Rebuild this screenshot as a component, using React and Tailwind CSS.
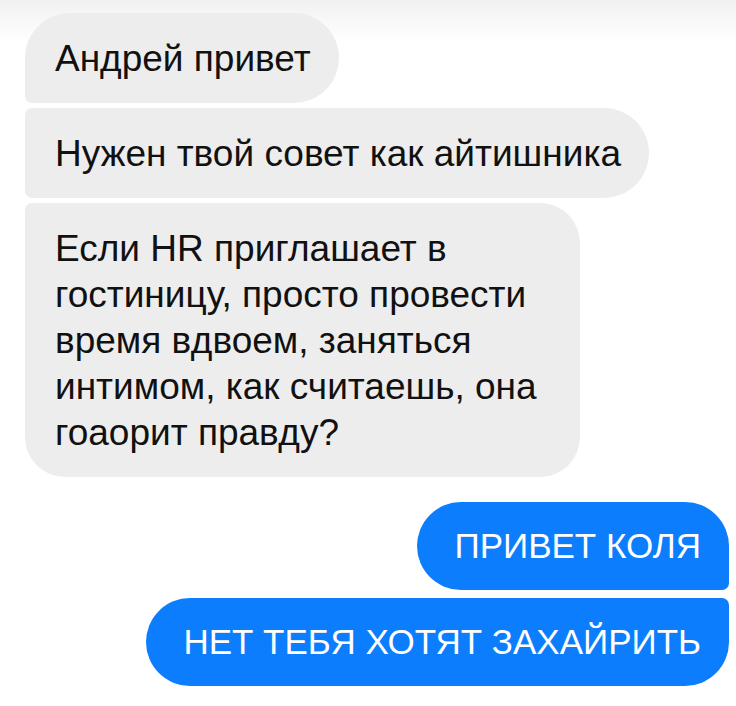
import React from "react";

const incoming = [
  { id: 1, lines: ["Андрей привет"], shape: "rounded-[45px] rounded-bl-[7px]" },
  { id: 2, lines: ["Нужен твой совет как айтишника"], shape: "rounded-r-[45px] rounded-l-[7px]" },
  {
    id: 3,
    lines: [
      "Если HR приглашает в",
      "гостиницу, просто провести",
      "время вдвоем, заняться",
      "интимом, как считаешь, она",
      "гоаорит правду?",
    ],
    shape: "w-[555px] rounded-[40px] rounded-tl-[7px]",
  },
];

const outgoing = [
  { id: 4, text: "ПРИВЕТ КОЛЯ", shape: "rounded-[44px] rounded-br-[7px]" },
  { id: 5, text: "НЕТ ТЕБЯ ХОТЯТ ЗАХАЙРИТЬ", shape: "rounded-[44px] rounded-tr-[7px]" },
];

const App = () => {
  return (
    <div className="min-h-[706px] bg-[linear-gradient(to_bottom,#f1f1f1_0px,#ffffff_42px)] pt-[13px] pl-[25px] pr-[7px] font-['Liberation_Sans',Arial,sans-serif]">
      {/* Incoming */}
      <div className="flex flex-col items-start gap-[5px]">
        {incoming.map((msg) => (
          <div
            key={msg.id}
            className={`bg-[#ededed] pl-[30px] pr-[28px] pt-[23px] pb-[21px] text-[37px] leading-[46px] text-[#111111] ${msg.shape}`}
          >
            {msg.lines.map((line, i) => (
              <div key={i}>{line}</div>
            ))}
          </div>
        ))}
      </div>

      {/* Outgoing */}
      <div className="mt-[25px] flex flex-col items-end gap-[8px]">
        {outgoing.map((msg) => (
          <div
            key={msg.id}
            className={`bg-[#0b7dfd] pl-[37px] pr-[28px] py-[22px] text-[35px] leading-[44px] text-white ${msg.shape}`}
          >
            {msg.text}
          </div>
        ))}
      </div>
    </div>
  );
};

export default App;
